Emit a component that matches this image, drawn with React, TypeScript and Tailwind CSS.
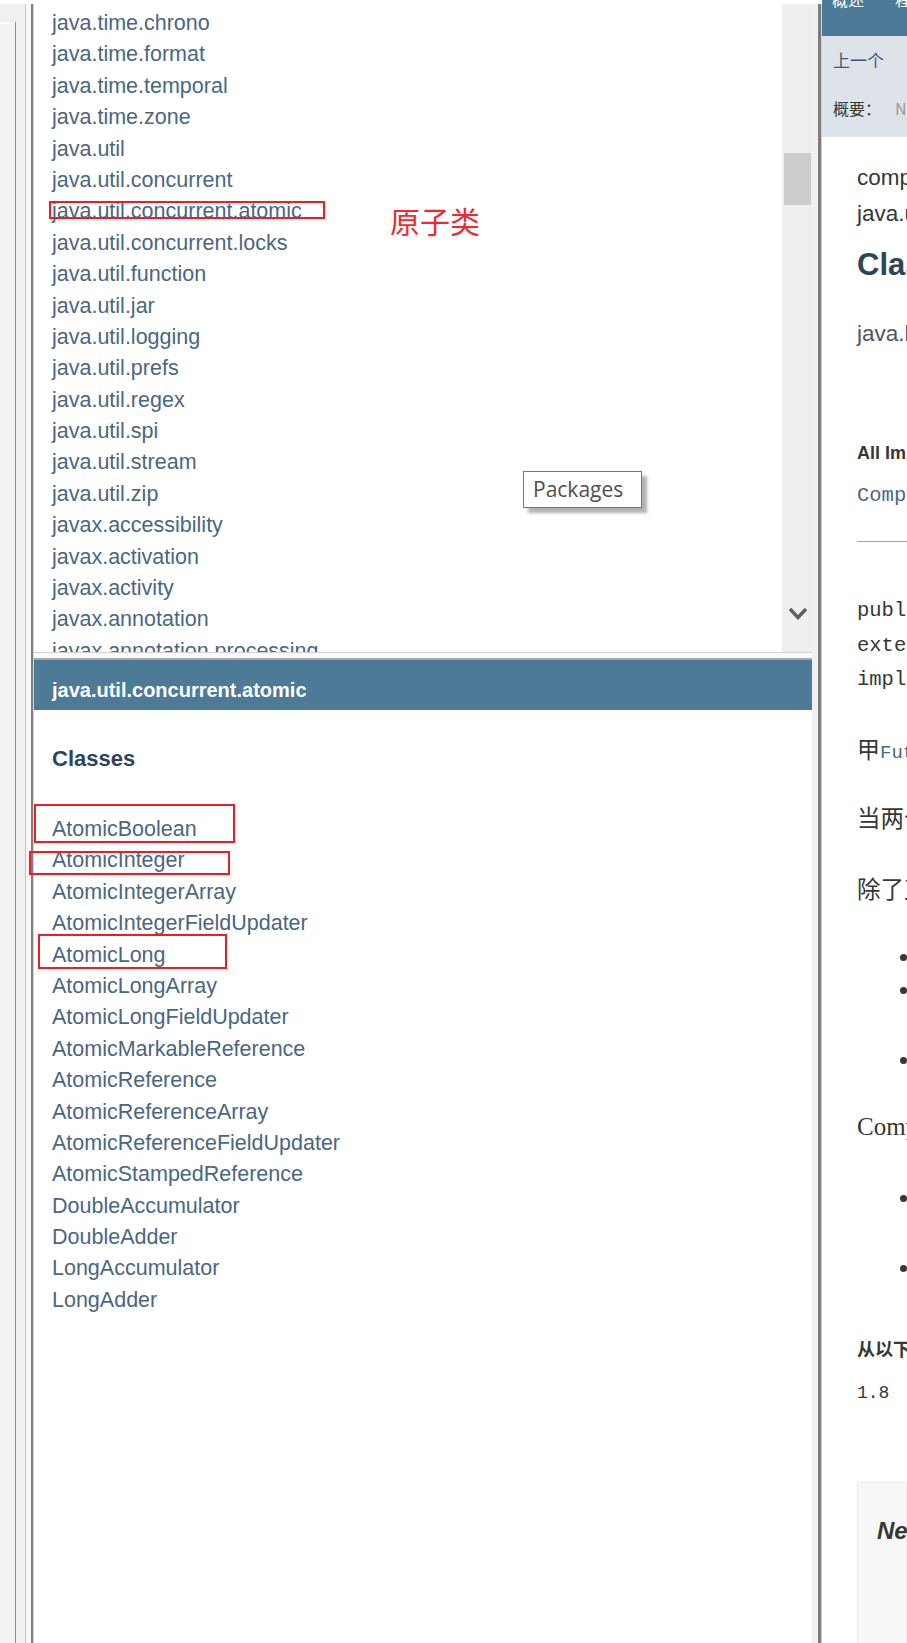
import React from 'react';

const packages = [
  'java.time.chrono',
  'java.time.format',
  'java.time.temporal',
  'java.time.zone',
  'java.util',
  'java.util.concurrent',
  'java.util.concurrent.atomic',
  'java.util.concurrent.locks',
  'java.util.function',
  'java.util.jar',
  'java.util.logging',
  'java.util.prefs',
  'java.util.regex',
  'java.util.spi',
  'java.util.stream',
  'java.util.zip',
  'javax.accessibility',
  'javax.activation',
  'javax.activity',
  'javax.annotation',
  'javax.annotation.processing',
];

const classes = [
  'AtomicBoolean',
  'AtomicInteger',
  'AtomicIntegerArray',
  'AtomicIntegerFieldUpdater',
  'AtomicLong',
  'AtomicLongArray',
  'AtomicLongFieldUpdater',
  'AtomicMarkableReference',
  'AtomicReference',
  'AtomicReferenceArray',
  'AtomicReferenceFieldUpdater',
  'AtomicStampedReference',
  'DoubleAccumulator',
  'DoubleAdder',
  'LongAccumulator',
  'LongAdder',
];

// window frame on the far left
function FrameEdge() {
  return (
    <div className="flex w-[34px] shrink-0 flex-col">
      <div className="h-[4px] bg-white" />
      <div className="flex flex-1">
        <div className="flex w-[15px] flex-col bg-[#f0f0f0]">
          <div className="h-[18px]" />
          <div className="h-[2px] bg-white" />
          <div className="flex-1 bg-[#f2f2f2]" />
        </div>
        <div className="flex w-[1px] flex-col">
          <div className="h-[18px] bg-[#f0f0f0]" />
          <div className="flex-1 bg-[#8c8c8c]" />
        </div>
        <div className="w-[9px] bg-[#f0f0f0]" />
        <div className="w-[1px] bg-[#c6c6c6]" />
        <div className="w-[5px] bg-[#f7f7f7]" />
        <div className="w-[2px] bg-[#808080]" />
        <div className="w-[1px] bg-[#d6d6d6]" />
      </div>
    </div>
  );
}

function PackagePane() {
  return (
    <div className="flex h-[652px]">
      <div className="w-[748px] overflow-hidden pl-[18px] pt-[8px]">
        {packages.map((p) => (
          <div key={p} className="h-[31.4px] whitespace-nowrap text-[21.5px] leading-[31.4px] text-[#4a6782]">
            {p}
          </div>
        ))}
      </div>
      <div className="flex w-[30px] flex-col">
        <div className="h-[4px] bg-white" />
        <div className="flex flex-1 flex-col bg-[#efefef]">
          <div className="ml-[2px] mt-[149px] h-[52px] w-[27px] bg-[#cdcdcd]" />
          <svg className="ml-[6px] mt-[402px]" width="20" height="14" viewBox="0 0 20 14">
            <path d="M2 2 L10 10.5 L18 2" fill="none" stroke="#5f5f5f" strokeWidth="3.4" />
          </svg>
        </div>
      </div>
    </div>
  );
}

function ClassPane() {
  return (
    <div className="flex-1">
      <div className="flex h-[50px] items-center bg-[#4d7a97] pl-[18px] pt-[10px] text-[20px] font-bold text-white">
        java.util.concurrent.atomic
      </div>
      <div className="pl-[18px]">
        <h2 className="mt-[33px] h-[31px] text-[22px] font-bold leading-[31px] text-[#2c4557]">Classes</h2>
        <ul className="mt-[40px]">
          {classes.map((c) => (
            <li key={c} className="h-[31.4px] whitespace-nowrap text-[21.5px] leading-[31.4px] text-[#4a6782]">
              {c}
            </li>
          ))}
        </ul>
      </div>
    </div>
  );
}

function Divider() {
  return (
    <div className="flex w-[10px] shrink-0 flex-col">
      <div className="h-[4px] bg-white" />
      <div className="flex flex-1">
        <div className="w-[6px] bg-[#f0f0f0]" />
        <div className="w-[3px] bg-[#7d7d7d]" />
        <div className="w-[1px] bg-[#d0d0d0]" />
      </div>
    </div>
  );
}

function Bullet({ children, tall }: { children?: React.ReactNode; tall?: boolean }) {
  return (
    <li className={tall ? 'flex h-[70px] items-start overflow-hidden' : 'flex h-[34px] items-start overflow-hidden'}>
      <span className="ml-[43px] mt-[13.5px] h-[7px] w-[7px] shrink-0 rounded-full bg-[#353833]" />
      <span className="ml-[12px] font-['Noto_Sans_CJK_SC',sans-serif] text-[22px] leading-[34px]">{children}</span>
    </li>
  );
}

function ClassDoc() {
  const cjk = "font-['Noto_Sans_CJK_SC',sans-serif]";
  const mono = "font-['Liberation_Mono','Courier_New',monospace]";
  return (
    <div className="w-[85px] shrink-0 overflow-hidden whitespace-nowrap text-[#353833]">
      <div className={`h-[36px] overflow-hidden bg-[#4d7a97] pl-[10px] text-[16px] leading-[18px] text-white ${cjk}`}>
        <div className="-mt-[10px]">
          概述<span className="ml-[31px]">程序包</span>
        </div>
      </div>
      <div className={`h-[101px] bg-[#dee3e9] pl-[11px] ${cjk}`}>
        <div className="h-[36px] pt-[12px] text-[17px] leading-[24px] text-[#3d5870]">上一个</div>
        <div className="mt-[24px] h-[24px] text-[16px] leading-[24px] text-[#353833]">
          概要：<span className="ml-[14px] text-[#9a9a9a]">Nested</span>
        </div>
      </div>
      <div className="pl-[35px]">
        <div className="mt-[23px] h-[36px] text-[22.5px] leading-[36px]">compact1, compact2, compact3</div>
        <div className="h-[36px] text-[22.5px] leading-[36px]">java.util.concurrent</div>
        <h2 className="mt-[16px] h-[34px] text-[31px] font-bold leading-[34px] text-[#2c4557]">Class CompletableFuture&lt;T&gt;</h2>
        <div className="mt-[35px] h-[34px] text-[22.5px] leading-[34px] text-[#4a5866]">java.lang.Object</div>
        <div className="mt-[89px] h-[26px] text-[18px] font-bold leading-[26px]">All Implemented Interfaces:</div>
        <div className={`mt-[17px] h-[26px] text-[20.5px] leading-[26px] text-[#4a6782] ${mono}`}>CompletionStage&lt;T&gt;, Future&lt;T&gt;</div>
        <div className="mt-[32px] h-[1px] bg-[#a0a0a0]" />
        <pre className={`mt-[52px] h-[103.5px] text-[20.5px] leading-[34.5px] ${mono}`}>
          {'public class CompletableFuture<T>\nextends Object\nimplements Future<T>, CompletionStage<T>'}
        </pre>
        <div className={`mt-[33.5px] h-[34px] overflow-hidden text-[23px] leading-[34px] ${cjk}`}>
          甲<span className={`text-[19px] leading-[20px] text-[#4a6782] ${mono}`}>Future</span>可以明确完成
        </div>
        <div className={`mt-[35px] h-[34px] text-[23.5px] leading-[34px] ${cjk}`}>当两个或多个线程尝试</div>
        <div className={`mt-[37px] h-[34px] text-[23.5px] leading-[34px] ${cjk}`}>除了直接操作状态和结果</div>
        <ul className="mt-[35px]">
          <li className="flex h-[33px] items-start">
            <span className="ml-[43px] mt-[13.5px] h-[7px] w-[7px] shrink-0 rounded-full bg-[#353833]" />
          </li>
          <Bullet tall>如果完成</Bullet>
          <Bullet>所有状态</Bullet>
        </ul>
        <div className="mt-[33px] h-[34px] font-['Liberation_Serif','Times_New_Roman',serif] text-[25px] leading-[34px]">
          CompletableFuture implements interface
        </div>
        <ul className="mt-[37px]">
          <Bullet tall>所有异步方法</Bullet>
          <Bullet>所有 CompletionStage</Bullet>
        </ul>
        <div className={`mt-[50px] h-[26px] text-[18px] font-bold leading-[26px] ${cjk}`}>从以下版本开始：</div>
        <div className={`mt-[19px] h-[26px] text-[18px] leading-[26px] ${mono}`}>1.8</div>
        <div className="mt-[76px] h-[200px] border border-[#ececec] bg-[#f8f8f8] pl-[19px] pt-[33px]">
          <div className="text-[24px] font-bold italic leading-[30px]">Nested Class Summary</div>
        </div>
      </div>
    </div>
  );
}

export default function App() {
  return (
    <div className="relative flex h-[1643px] w-[907px] overflow-hidden bg-white font-['Liberation_Sans',Arial,sans-serif]">
      <FrameEdge />
      <div className="flex w-[778px] shrink-0 flex-col">
        <PackagePane />
        <div className="h-[1px] bg-[#d2d2d2]" />
        <div className="h-[5px] bg-[#fafafa]" />
        <div className="h-[2px] bg-[#a9a9a9]" />
        <ClassPane />
      </div>
      <Divider />
      <ClassDoc />

      {/* red annotations */}
      <div className="absolute left-[49px] top-[201px] h-[18px] w-[276px] border-2 border-[#ee1d24]" />
      <div className="absolute left-[390px] top-[202px] font-['Noto_Sans_CJK_SC',sans-serif] text-[30px] leading-[36px] text-[#ee2a30]">
        原子类
      </div>
      <div className="absolute left-[34px] top-[804px] h-[39px] w-[201px] border-2 border-[#ee1d24]" />
      <div className="absolute left-[29px] top-[851px] h-[24px] w-[201px] border-2 border-[#ee1d24]" />
      <div className="absolute left-[38px] top-[934px] h-[35px] w-[189px] border-2 border-[#ee1d24]" />

      {/* tooltip */}
      <div className="absolute left-[523px] top-[471px] flex h-[37px] w-[119px] items-center border border-[#767676] bg-white pl-[9px] font-['Open_Sans',sans-serif] text-[21px] text-[#4f4f4f] shadow-[5px_5px_3px_rgba(0,0,0,0.3)]">
        Packages
      </div>
    </div>
  );
}
